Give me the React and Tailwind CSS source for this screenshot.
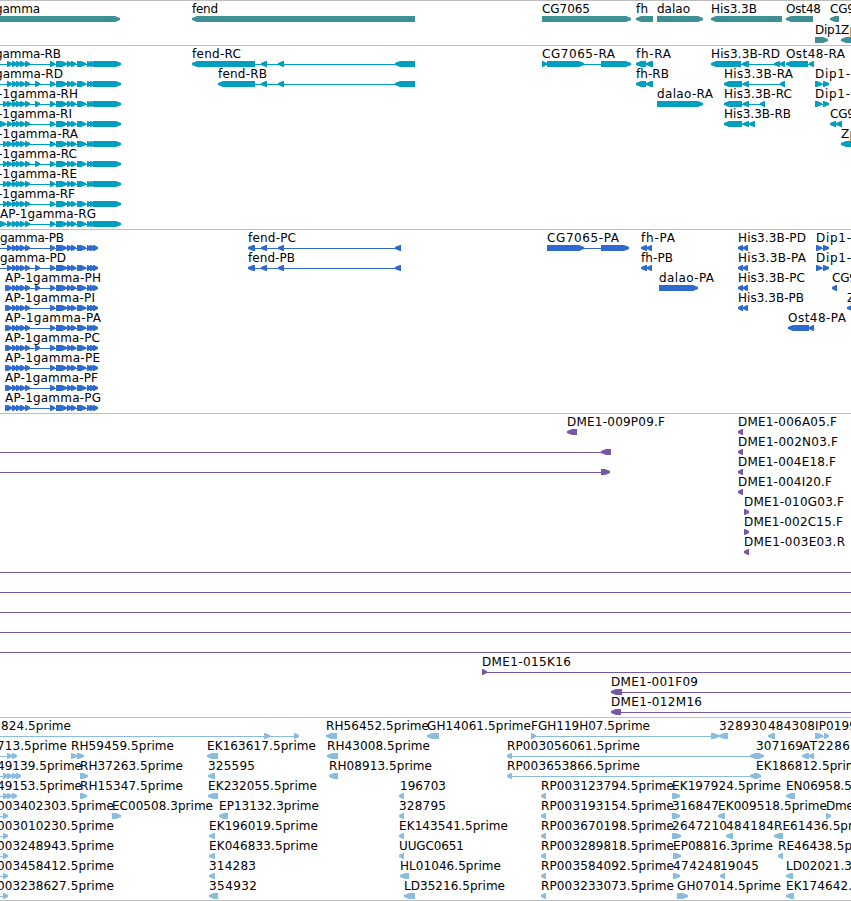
const WIDTH = 851;

// Feature: [row, label, label start, label end, [line start, line end], blocks]
// Block: [start, end, "<" or ">"]
const GENES = [
  [0, "gamma", -5, 40, null, [[-10, 120, ">"]]],
  [0, "fend", 192, 218, null, [[192, 415, "<"]]],
  [0, "CG7065", 542, 590, null, [[542, 631, ">"]]],
  [0, "fh", 636, 648, null, [[636, 653, "<"]]],
  [0, "dalao", 657, 690, null, [[657, 703, ">"]]],
  [0, "His3.3B", 711, 757, null, [[711, 782, "<"]]],
  [0, "Ost48", 786, 821, null, [[786, 813, "<"]]],
  [0, "CG9", 830, 855, null, [[830, 839, "<"]]],
  [1, "Dip1", 815, 842, null, [[815, 828, ">"]]],
  [1, "Zp", 841, 857, null, [[841, 870, "<"]]],
];

const right = (starts) => starts.map((x) => [x, x + 5, ">"]);

const GAMMA_FIRST = right([7, 12, 16, 20, 25]);
const GAMMA_EXTRA = right([35]);
const GAMMA_MIDDLE = [
  [50, 55, ">"],
  [56, 67, ">"],
  [67, 72, ">"],
  [71, 76, ">"],
  [77, 86, ">"],
];
const GAMMA_RNA = [...GAMMA_FIRST, ...GAMMA_MIDDLE, ...right([87, 90]), [93, 121, ">"]];
const GAMMA_CDS = [...GAMMA_FIRST, ...GAMMA_MIDDLE, ...right([87, 90, 93])];

const FEND_TAIL = [
  [261, 267, "<"],
  [278, 284, "<"],
];

const TRANSCRIPTS = [
  [0, "gamma-RB", -5, 61, [-10, 95], GAMMA_RNA],
  [1, "gamma-RD", -5, 63, [-10, 95], [...GAMMA_RNA, ...GAMMA_EXTRA]],
  [2, "-1gamma-RH", -2, 78, [-10, 95], [...right([3]), ...GAMMA_RNA, ...GAMMA_EXTRA]],
  [3, "-1gamma-RI", -2, 72, [-10, 95], [[-8, 6, ">"], ...GAMMA_RNA]],
  [4, "-1gamma-RA", -2, 78, [-10, 95], [...right([3]), ...GAMMA_RNA]],
  [5, "-1gamma-RC", -2, 77, [-10, 95], [...right([3]), ...GAMMA_RNA, ...GAMMA_EXTRA]],
  [6, "-1gamma-RE", -2, 77, [-10, 95], [...right([3]), ...GAMMA_RNA]],
  [7, "-1gamma-RF", -2, 75, [-10, 95], [...right([3]), ...GAMMA_RNA]],
  [8, "AP-1gamma-RG", 0, 96, [-10, 95], [[-8, 6, ">"], ...GAMMA_RNA]],
  [0, "fend-RC", 192, 241, [192, 415], [[192, 255, "<"], ...FEND_TAIL, [395, 415, "<"]]],
  [1, "fend-RB", 218, 267, [218, 415], [[218, 255, "<"], ...FEND_TAIL, [395, 415, "<"]]],
  [0, "CG7065-RA", 542, 615, [542, 631], [[542, 547, ">"], [547, 584, ">"], [601, 631, ">"]]],
  [0, "fh-RA", 636, 671, [636, 653], [[636, 646, "<"], [646, 653, "<"]]],
  [1, "fh-RB", 636, 669, [636, 653], [[636, 646, "<"], [646, 653, "<"]]],
  [2, "dalao-RA", 657, 713, null, [[657, 703, ">"]]],
  [0, "His3.3B-RD", 711, 780, [711, 785], [[711, 741, "<"], [742, 749, "<"], [774, 780, "<"], [780, 785, "<"]]],
  [1, "His3.3B-RA", 724, 793, [724, 785], [[724, 742, "<"], [743, 749, "<"], [780, 785, "<"]]],
  [2, "His3.3B-RC", 724, 792, [724, 765], [[724, 742, "<"], [743, 749, "<"], [760, 765, "<"]]],
  [3, "His3.3B-RB", 724, 791, [724, 755], [[724, 742, "<"], [743, 749, "<"], [749, 755, "<"]]],
  [0, "Ost48-RA", 786, 845, [786, 814], [[786, 808, "<"], [809, 814, "<"]]],
  [1, "Dip1-", 815, 850, [815, 829], [[815, 822, ">"], [823, 829, ">"]]],
  [2, "Dip1-", 815, 850, [815, 829], [[815, 822, ">"], [823, 829, ">"]]],
  [3, "CG9", 830, 855, [830, 842], [[830, 836, "<"], [836, 842, "<"]]],
  [4, "Zp", 841, 857, null, [[841, 870, "<"]]],
];

const PROTEINS = [
  [0, "gamma-PB", 0, 64, [-10, 95], GAMMA_CDS],
  [1, "gamma-PD", 0, 66, [-10, 95], [...GAMMA_CDS, ...GAMMA_EXTRA]],
  [2, "AP-1gamma-PH", 5, 101, [5, 95], [...right([5]), ...GAMMA_CDS, ...GAMMA_EXTRA]],
  [3, "AP-1gamma-PI", 5, 95, [5, 95], [...right([5]), ...GAMMA_CDS]],
  [4, "AP-1gamma-PA", 5, 101, [5, 95], [...right([5]), ...GAMMA_CDS]],
  [5, "AP-1gamma-PC", 5, 100, [5, 95], [...right([5]), ...GAMMA_CDS, ...GAMMA_EXTRA]],
  [6, "AP-1gamma-PE", 5, 100, [5, 95], [...right([5]), ...GAMMA_CDS]],
  [7, "AP-1gamma-PF", 5, 98, [5, 95], [...right([5]), ...GAMMA_CDS]],
  [8, "AP-1gamma-PG", 5, 101, [5, 95], [...right([5]), ...GAMMA_CDS]],
  [0, "fend-PC", 248, 296, [248, 401], [[248, 255, "<"], ...FEND_TAIL, [395, 401, "<"]]],
  [1, "fend-PB", 248, 295, [248, 401], [[248, 255, "<"], ...FEND_TAIL, [395, 401, "<"]]],
  [0, "CG7065-PA", 547, 619, [547, 629], [[547, 584, ">"], [601, 629, ">"]]],
  [0, "fh-PA", 641, 675, [641, 652], [[641, 647, "<"], [647, 652, "<"]]],
  [1, "fh-PB", 641, 673, [641, 652], [[641, 647, "<"], [647, 652, "<"]]],
  [2, "dalao-PA", 659, 714, null, [[659, 698, ">"]]],
  [0, "His3.3B-PD", 738, 806, [738, 748], [[738, 743, "<"], [743, 748, "<"]]],
  [1, "His3.3B-PA", 738, 806, [738, 748], [[738, 743, "<"], [743, 748, "<"]]],
  [2, "His3.3B-PC", 738, 805, [738, 748], [[738, 743, "<"], [743, 748, "<"]]],
  [3, "His3.3B-PB", 738, 804, [738, 748], [[738, 743, "<"], [743, 748, "<"]]],
  [4, "Ost48-PA", 788, 846, [788, 814], [[788, 809, "<"], [809, 814, "<"]]],
  [0, "Dip1-", 816, 851, [816, 829], [[816, 822, ">"], [823, 829, ">"]]],
  [1, "Dip1-", 816, 851, [816, 829], [[816, 822, ">"], [823, 829, ">"]]],
  [2, "CG9", 832, 857, null, [[832, 837, "<"]]],
  [3, "Z", 847, 855, null, [[847, 870, "<"]]],
];

const BACS = [
  [0, "DME1-009P09.F", 567, 665, null, [[567, 577, "<"]]],
  [0, "DME1-006A05.F", 738, 837, null, [[738, 743, "<"]]],
  [1, "DME1-002N03.F", 738, 838, null, [[738, 743, "<"]]],
  [2, "DME1-004E18.F", 738, 836, null, [[738, 743, "<"]]],
  [3, "DME1-004I20.F", 738, 832, null, [[738, 743, "<"]]],
  [4, "DME1-010G03.F", 744, 844, null, [[744, 749, ">"]]],
  [5, "DME1-002C15.F", 744, 843, null, [[744, 749, ">"]]],
  [6, "DME1-003E03.R", 744, 845, null, [[744, 749, "<"]]],
  [1, "", 0, 0, [0, 605], [[601, 611, "<"]]],
  [2, "", 0, 0, [0, 605], [[601, 610, ">"]]],
  [7, "", 0, 0, [0, WIDTH], []],
  [8, "", 0, 0, [0, WIDTH], []],
  [9, "", 0, 0, [0, WIDTH], []],
  [10, "", 0, 0, [0, WIDTH], []],
  [11, "", 0, 0, [0, WIDTH], []],
  [12, "DME1-015K16", 482, 571, [482, WIDTH], [[482, 487, ">"]]],
  [13, "DME1-001F09", 611, 698, [611, WIDTH], [[611, 622, "<"]]],
  [14, "DME1-012M16", 611, 702, [611, WIDTH], [[611, 621, "<"]]],
];

const ESTS = [
  [0, "824.5prime", 1, 71, [0, 299], [[264, 270, ">"], [294, 299, ">"]]],
  [0, "RH56452.5prime", 326, 429, null, [[326, 337, "<"]]],
  [0, "GH14061.5prime", 427, 531, null, [[427, 439, "<"]]],
  [0, "FGH119H07.5prime", 531, 650, [531, 728], [[531, 536, ">"], [711, 719, ">"], [719, 728, "<"]]],
  [0, "328930", 719, 767, null, []],
  [0, "484308", 768, 815, null, [[768, 775, "<"]]],
  [0, "IP0199", 815, 857, [815, 829], [[815, 823, ">"], [824, 829, ">"]]],

  [1, "713.5prime", -3, 67, [0, 17], right([7, 12])],
  [1, "RH59459.5prime", 71, 174, null, [[71, 77, ">"], [77, 84, ">"]]],
  [1, "EK163617.5prime", 207, 316, null, [[207, 218, "<"]]],
  [1, "RH43008.5prime", 327, 430, null, [[327, 338, "<"]]],
  [1, "RP003056061.5prime", 507, 640, [507, 757], [[507, 512, "<"], [750, 757, "<"], [757, 764, ">"]]],
  [1, "307169", 756, 803, null, []],
  [1, "AT2286", 802, 850, null, [[802, 809, "<"], [809, 814, "<"]]],

  [2, "49139.5prime", -3, 82, [0, 21], right([3, 7, 12, 16])],
  [2, "RH37263.5prime", 80, 183, null, [[80, 88, ">"]]],
  [2, "325595", 208, 255, null, [[208, 215, "<"]]],
  [2, "RH08913.5prime", 329, 432, null, [[329, 338, "<"]]],
  [2, "RP003653866.5prime", 507, 640, [507, 757], [[507, 512, "<"], [750, 756, "<"], [756, 761, ">"]]],
  [2, "EK186812.5prime", 756, 865, null, []],

  [3, "49153.5prime", -3, 82, [0, 17], right([3, 7, 12])],
  [3, "RH15347.5prime", 80, 183, null, [[80, 87, ">"]]],
  [3, "EK232055.5prime", 208, 317, null, [[208, 218, "<"]]],
  [3, "196703", 400, 446, null, [[399, 404, "<"]]],
  [3, "RP003123794.5prime", 541, 674, null, [[541, 546, "<"]]],
  [3, "EK197924.5prime", 672, 781, null, [[672, 680, ">"]]],
  [3, "EN06958.5", 786, 852, null, [[786, 795, "<"]]],

  [4, "003402303.5prime", -3, 114, [0, 8], right([3])],
  [4, "EC00508.3prime", 112, 213, null, [[112, 121, ">"]]],
  [4, "EP13132.3prime", 219, 319, null, [[219, 228, "<"]]],
  [4, "328795", 399, 446, null, [[399, 404, "<"]]],
  [4, "RP003193154.5prime", 541, 674, null, [[541, 546, "<"]]],
  [4, "316847", 672, 719, null, [[672, 680, ">"]]],
  [4, "EK009518.5prime", 718, 827, null, [[718, 725, "<"]]],
  [4, "Dme", 826, 854, null, [[826, 831, ">"]]],

  [5, "003010230.5prime", -3, 114, [0, 8], right([3])],
  [5, "EK196019.5prime", 209, 318, null, [[209, 215, "<"]]],
  [5, "EK143541.5prime", 399, 508, null, [[399, 404, "<"]]],
  [5, "RP003670198.5prime", 541, 674, null, [[541, 546, "<"]]],
  [5, "2647210", 672, 727, null, [[672, 681, ">"]]],
  [5, "484184", 726, 774, null, [[726, 733, "<"]]],
  [5, "RE61436.5pr", 774, 853, null, [[774, 783, "<"]]],

  [6, "003248943.5prime", -3, 114, [0, 8], right([3])],
  [6, "EK046833.5prime", 209, 318, null, [[209, 215, "<"]]],
  [6, "UUGC0651", 399, 464, null, [[399, 404, "<"]]],
  [6, "RP003289818.5prime", 541, 674, null, [[541, 546, "<"]]],
  [6, "EP08816.3prime", 673, 773, null, [[673, 681, ">"]]],
  [6, "RE46438.5p", 778, 852, null, [[778, 783, "<"]]],

  [7, "003458412.5prime", -3, 114, [0, 8], right([3])],
  [7, "314283", 209, 256, null, [[209, 215, "<"]]],
  [7, "HL01046.5prime", 400, 501, null, [[400, 409, "<"]]],
  [7, "RP003584092.5prime", 541, 674, null, [[541, 546, "<"]]],
  [7, "474248", 673, 721, null, [[673, 680, ">"]]],
  [7, "19045", 720, 759, null, [[720, 725, "<"]]],
  [7, "LD02021.3", 786, 852, null, [[786, 793, "<"]]],

  [8, "003238627.5prime", -3, 114, [0, 8], right([3])],
  [8, "354932", 209, 257, null, [[209, 218, "<"]]],
  [8, "LD35216.5prime", 404, 505, null, [[404, 415, "<"]]],
  [8, "RP003233073.5prime", 541, 674, null, [[541, 546, "<"]]],
  [8, "GH07014.5prime", 677, 781, null, [[677, 688, ">"]]],
  [8, "EK174642.", 786, 852, null, [[786, 794, "<"]]],
];

const TRACKS = [
  { id: "genes", features: GENES, height: 44, pitch: 21, color: "text-[#3f8f96]" },
  { id: "transcripts", features: TRANSCRIPTS, height: 183, pitch: 20, color: "text-[#009fc0]" },
  { id: "proteins", features: PROTEINS, height: 183, pitch: 20, color: "text-[#2f6bcf]" },
  { id: "bacs", features: BACS, height: 303, pitch: 20, color: "text-[#7658a9]" },
  { id: "ests", features: ESTS, height: 182, pitch: 20, color: "text-[#8abddd]" },
];

function Block({ start, end, direction }) {
  const head = Math.min(5, end - start - 1);
  const points =
    direction === "<"
      ? `${start},17 ${start + head},15 ${end},15 ${end},21 ${start + head},21 ${start},19`
      : `${start},15 ${end - head},15 ${end},17 ${end},19 ${end - head},21 ${start},21`;

  return <polygon points={points} />;
}

function Feature({ feature, pitch }) {
  const [row, label, x, labelEnd, line, blocks] = feature;

  return (
    <g transform={`translate(0 ${row * pitch})`}>
      <g fill="currentColor">
        {line && <rect x={line[0]} y={18} width={line[1] - line[0]} height={1} />}
        {blocks.map(([start, end, direction]) => (
          <Block direction={direction} end={end} key={start} start={start} />
        ))}
      </g>
      {label && (
        <text className="fill-black" textLength={labelEnd - x} x={x} y={12}>
          {label}
        </text>
      )}
    </g>
  );
}

function Track({ features, height, pitch, color }) {
  return (
    <section className="border-t border-[#bebebe]">
      <svg
        className={`block font-['DejaVu_Sans',sans-serif] text-[12px] ${color}`}
        height={height}
        viewBox={`0 0 ${WIDTH} ${height}`}
        width={WIDTH}
      >
        {features.map((feature, index) => (
          <Feature feature={feature} key={index} pitch={pitch} />
        ))}
      </svg>
    </section>
  );
}

export default function App() {
  return (
    <main className="flex h-[901px] w-[851px] flex-col overflow-hidden border-b border-[#bebebe] bg-white">
      {TRACKS.map(({ id, ...track }) => (
        <Track key={id} {...track} />
      ))}
    </main>
  );
}
